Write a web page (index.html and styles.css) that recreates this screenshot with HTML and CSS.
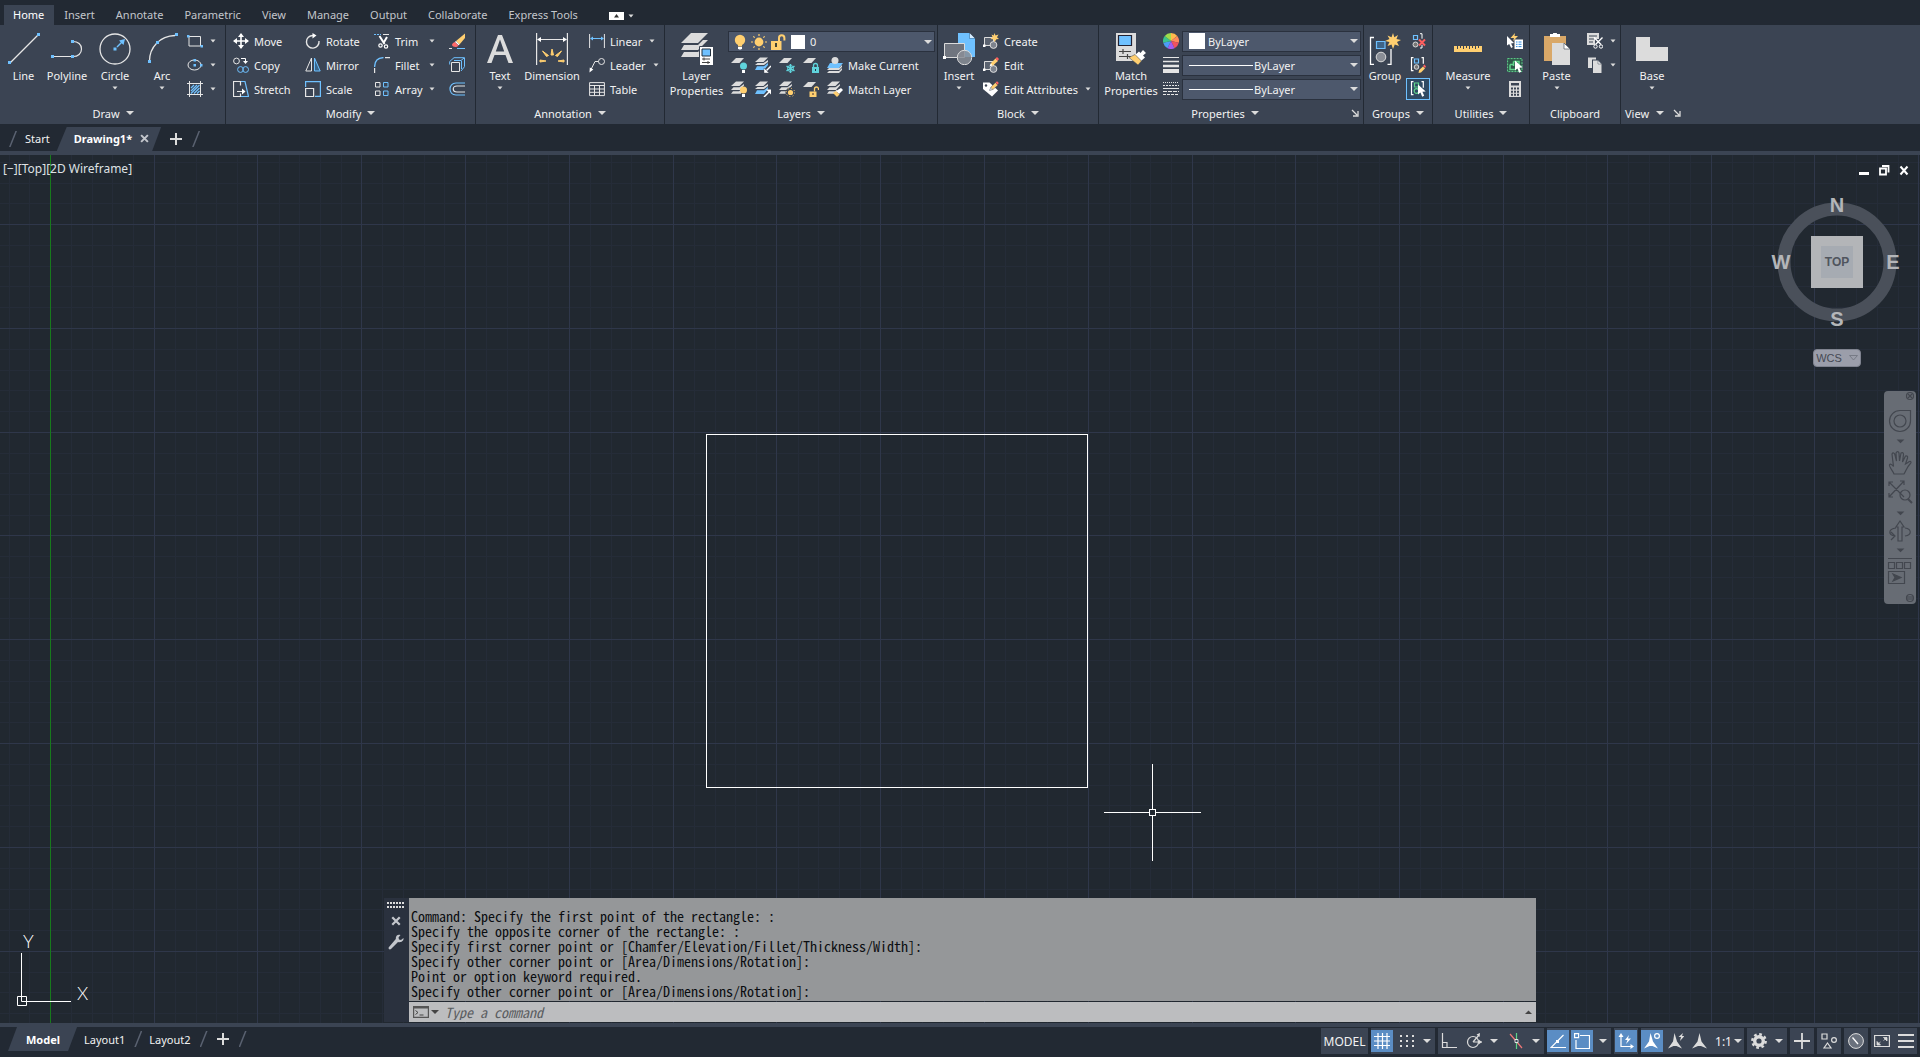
FILE: index.html
```
<!DOCTYPE html>
<html lang="en">
<head>
<meta charset="utf-8">
<meta name="viewport" content="width=device-width, initial-scale=1">
<title>Drawing1*</title>
<link rel="stylesheet" href="styles.css">
</head>
<body>
<svg class="sprite" aria-hidden="true">
  <symbol id="caret" viewBox="0 0 8 8"><path d="M0 2h8L4 6z" fill="#dcdcdc"/></symbol>
  <symbol id="caret-s" viewBox="0 0 6 6"><path d="M0.500 1.500h5L3 4.500z" fill="#dcdcdc"/></symbol>
  <symbol id="launcher" viewBox="0 0 8 8"><path d="M1 1l5 5M7 2v5H2" fill="none" stroke="#dcdcdc" stroke-width="1.300"/></symbol>

  <symbol id="line" viewBox="0 0 32 32"><path d="M2 30L30 2" stroke="#e6e6e6" stroke-width="1.200"/><path d="M0 28h3v3H0zM29 0h3v3h-3z" fill="#6fc1ff"/></symbol>
  <symbol id="polyline" viewBox="0 0 32 32"><path d="M3 23.500H20M22 8.500c5 0 8.500 3 8.500 7.500s-3.500 7.500-8.500 7.500" fill="none" stroke="#e6e6e6" stroke-width="1.200"/><path d="M0 22h3v3H0zM20 22h3v3h-3zM20 7h3v3h-3z" fill="#6fc1ff"/></symbol>
  <symbol id="circle" viewBox="0 0 32 32"><circle cx="16" cy="16" r="15" fill="none" stroke="#e6e6e6" stroke-width="1.300"/><path d="M18 14l5-5" stroke="#6fc1ff" stroke-width="1.500"/><path d="M14.500 14.500h3v3h-3zM26 6l-1.500 6-4.500-4.500z" fill="#6fc1ff"/></symbol>
  <symbol id="arc" viewBox="0 0 32 32"><path d="M3.500 28C3.500 14 14 3 29 2.500" fill="none" stroke="#e6e6e6" stroke-width="1.300"/><path d="M2 27h3v3H2zM10 8h3v3h-3zM29 0h3v3h-3z" fill="#6fc1ff"/></symbol>
  <symbol id="rect" viewBox="0 0 16 16"><path d="M2 3.500H13.500V13H2z" fill="none" stroke="#e6e6e6"/><path d="M0 2h2.500v2.500H0zM13.500 12H16v2.500h-2.500z" fill="#6fc1ff"/></symbol>
  <symbol id="ellipse" viewBox="0 0 16 16"><ellipse cx="7.500" cy="8" rx="6.500" ry="5" fill="none" stroke="#e6e6e6"/><path d="M6.500 7h2.500v2.500H6.500zM6.500 2H9v2.500H6.500zM13 7h2.500v2.500H13z" fill="#6fc1ff"/></symbol>
  <symbol id="hatch" viewBox="0 0 16 16"><path d="M2.500 0v16M13.500 0v16M0 2.500h16M0 13.500h16" stroke="#e6e6e6"/><path d="M4 7l3-3M4 10l6-6M4 12.500L12.500 4M7 12.500L12.500 7M10 12.500l2.500-2.500" stroke="#6fc1ff" stroke-width="1.200"/></symbol>

  <symbol id="move" viewBox="0 0 16 16"><path d="M8 1v14M1 8h14" stroke="#fff" stroke-width="1.600"/><path d="M8 0l3 4H5zM8 16l3-4H5zM0 8l4-3v6zM16 8l-4-3v6z" fill="#fff"/></symbol>
  <symbol id="copy" viewBox="0 0 16 16"><g fill="none"><circle cx="3.500" cy="4" r="2.900" stroke="#e6e6e6"/><circle cx="7.500" cy="12.500" r="2.900" stroke="#6fc1ff"/><circle cx="12.600" cy="12.500" r="2.900" stroke="#6fc1ff"/><path d="M8 1.500h4.500V5" stroke="#fff"/></g><path d="M10 4h5l-2.500 3z" fill="#fff"/></symbol>
  <symbol id="stretch" viewBox="0 0 16 16"><path d="M7.500 4.500v-4h-7v15h7v-3M4 10.500h6" fill="none" stroke="#e6e6e6" stroke-width="1.200"/><path d="M9 7.500l3.500 3L9 13.500z" fill="#fff"/><path d="M8 .5h4l3.500 15H8" fill="none" stroke="#6fc1ff" stroke-width="1.200"/></symbol>
  <symbol id="rotate" viewBox="0 0 16 16"><path d="M8 2.500A6.300 6.300 0 1 0 14 8" fill="none" stroke="#e6e6e6" stroke-width="1.400"/><path d="M7.500 0v5.500L11.500 2.500z" fill="#fff"/></symbol>
  <symbol id="mirror" viewBox="0 0 16 16"><path d="M6.500 1v13H.8z" fill="none" stroke="#e6e6e6"/><path d="M9.500 1v13h5.700z" fill="#3a668b" stroke="#6fc1ff"/></symbol>
  <symbol id="scale" viewBox="0 0 16 16"><path d="M.6 6V.6h14.800v14.800H10" fill="none" stroke="#6fc1ff" stroke-width="1.200"/><path d="M.6 7.500h8v8h-8z" fill="none" stroke="#e6e6e6" stroke-width="1.200"/></symbol>
  <symbol id="trim" viewBox="0 0 16 16"><path d="M0 1.500h7" stroke="#6fc1ff" stroke-dasharray="2 1"/><path d="M9 1.500h6" stroke="#e6e6e6"/><path d="M5.500 3l5 8M13 4l-3.500 6" stroke="#fff" stroke-width="2"/><circle cx="6.500" cy="12.500" r="1.700" fill="none" stroke="#fff" stroke-width="1.200"/><circle cx="12" cy="13.500" r="1.700" fill="none" stroke="#fff" stroke-width="1.200"/></symbol>
  <symbol id="fillet" viewBox="0 0 16 16"><path d="M.6 10C.6 4 4 .8 9.500.6" fill="none" stroke="#6fc1ff" stroke-width="1.300"/><path d="M.6 11v5M11 .6h5" stroke="#e6e6e6" stroke-width="1.200"/></symbol>
  <symbol id="array" viewBox="0 0 16 16"><path d="M1.500 1.500h4.500v4.500H1.500zM1.500 10h4.500v4.500H1.500z" fill="none" stroke="#e6e6e6"/><path d="M9.500 1.500H14v4.500H9.500zM9.500 10H14v4.500H9.500z" fill="none" stroke="#6fc1ff"/></symbol>
  <symbol id="erase" viewBox="0 0 16 16"><path d="M16 .5L7 8l3.500 3.500L16 5z" fill="#ffcf70"/><path d="M7 8l3.500 3.500-1 .8L5.800 9z" fill="#fff"/><path d="M5.800 9l3.700 3.500C7.500 15 3.500 14 3 12c0-1.500 1.500-2.500 2.800-3z" fill="#ff6a6a"/><path d="M0 15.500h3" stroke="#e6e6e6"/><path d="M8 15.500h8" stroke="#6fc1ff"/></symbol>
  <symbol id="explode" viewBox="0 0 16 16"><path d="M2.500 5.500h8v9h-8z" fill="none" stroke="#e6e6e6"/><path d="M.7 4.500L5 .7h10.500v9L12 14M.7 4.500v3M5 3.500h7l3-2.500M12.500 4v8" fill="none" stroke="#6fc1ff"/></symbol>
  <symbol id="offset" viewBox="0 0 16 16"><path d="M16 2H7C-1 2-1 14 7 14h9" fill="none" stroke="#6fc1ff" stroke-width="1.200"/><path d="M16 5H8C3 5 3 11 8 11h8" fill="none" stroke="#e6e6e6" stroke-width="1.200"/></symbol>

  <symbol id="text" viewBox="0 0 32 32"><path d="M3 30L14 2h4l11 28h-4.500l-3-8h-11l-3 8zM11.800 18.500h8.400L16 6.500z" fill="#dcdcdc" fill-rule="evenodd"/></symbol>
  <symbol id="dimension" viewBox="0 0 32 32"><path d="M.6 0v32M31.400 0v32M3 6.500h26" stroke="#e6e6e6" stroke-width="1.200"/><path d="M1 6.500L5 4v5zM31 6.500L27 4v5z" fill="#fff"/><path d="M15 22l1-6 1.500 6zM10.500 23.500L6.500 18l6 4.500zM21.500 23.500l4-5.500-6 4.500zM10 28l-6-1v2zM22 28l6-1v2z" fill="#ffcf70" stroke="#ffcf70"/></symbol>
  <symbol id="linear" viewBox="0 0 16 16"><path d="M.6 1v14M15.400 1v14" stroke="#e6e6e6"/><path d="M2 5.500h12" stroke="#6fc1ff"/><path d="M1 5.500l3-2v4zM15 5.500l-3-2v4z" fill="#6fc1ff"/></symbol>
  <symbol id="leader" viewBox="0 0 16 16"><circle cx="12.500" cy="4.500" r="3" fill="none" stroke="#e6e6e6"/><path d="M9.500 4.500H6l-4 8" fill="none" stroke="#e6e6e6"/><path d="M.5 15.500l.3-5 3.500 2z" fill="#fff"/></symbol>
  <symbol id="table" viewBox="0 0 16 16"><path d="M.6 1.600h14.800v13H.6zM.6 4.500h14.800M.6 8h14.800M.6 11.300h14.800M5.500 4.500v10M10.500 4.500v10" fill="none" stroke="#e6e6e6"/></symbol>

  <symbol id="layerprops" viewBox="0 0 32 32"><path d="M10 0h17l-10 10H0z" fill="#dcdcdc"/><path d="M3 12h14l5-5h5L17 17H0zM3 19h14l3-3v8H0z" fill="#dcdcdc"/><path d="M18.500 13.500h14v19h-14z" fill="#fff" stroke="#3b4453"/><path d="M21 16h8.500v7H21z" fill="#6fc1ff" stroke="#22303e"/><path d="M21 26h8M21 29.500h8M23 24.500v3M27 28v3" stroke="#444"/></symbol>
  <symbol id="sheet" viewBox="0 0 16 16"><path d="M5 1h8l-4.500 5H0z" fill="#dcdcdc"/></symbol>
  <symbol id="sheets" viewBox="0 0 16 16"><path d="M5 .5h8L8.500 5H0z" fill="#dcdcdc"/><path d="M2.500 6.200h6L13 3v1.500L9 9H0zM2 10.200h6l2-1.500v4H0z" fill="#dcdcdc"/></symbol>
  <symbol id="sheets-blue" viewBox="0 0 16 16"><path d="M5 .5h8L8.500 5H0z" fill="#dcdcdc"/><path d="M2.500 6h6L13 3v2L9 8H0z" fill="#dcdcdc"/><path d="M2 9.200h7L13 6v2l-4 5H0z" fill="#6fc1ff"/></symbol>
  <symbol id="l-off" viewBox="0 0 16 16"><use href="#sheet"/><circle cx="12.500" cy="9" r="3.500" fill="#5fd3dc"/><path d="M11 13h3v3h-3z" fill="#fff"/></symbol>
  <symbol id="l-iso" viewBox="0 0 16 16"><use href="#sheets-blue"/><path d="M16 9l-5 5" stroke="#fff" stroke-width="1.500"/><path d="M9 16v-5l5 5z" fill="#fff" stroke="#3b4453" stroke-width=".4"/></symbol>
  <symbol id="l-freeze" viewBox="0 0 16 16"><use href="#sheet"/><path d="M11.500 7v9M7.500 9.200l8 4.600M15.500 9.200l-8 4.600" stroke="#5fd3dc" stroke-width="1.500"/><circle cx="11.500" cy="11.500" r="3" fill="none" stroke="#5fd3dc"/></symbol>
  <symbol id="l-lock" viewBox="0 0 16 16"><use href="#sheet"/><path d="M10.500 10.500V8.500a2 2 0 0 1 4 0v2" fill="none" stroke="#5fd3dc" stroke-width="1.300"/><path d="M9 10h7v6H9z" fill="#5fd3dc"/><path d="M12 12h1v2h-1z" fill="#234"/></symbol>
  <symbol id="l-current" viewBox="0 0 16 16"><path d="M3 6h13l-4 5H0z" fill="#6fc1ff"/><circle cx="8" cy="3.500" r="3.500" fill="#dcdcdc"/><path d="M2 11h10l3-3v2l-3 3H0zM2 14h10l3-3v2l-3 3H0z" fill="#dcdcdc"/></symbol>
  <symbol id="l-on" viewBox="0 0 16 16"><use href="#sheets"/><circle cx="12.500" cy="9" r="3.500" fill="#ffcf70"/><path d="M11 13h3v3h-3z" fill="#fff"/></symbol>
  <symbol id="l-uniso" viewBox="0 0 16 16"><use href="#sheets-blue"/><path d="M9 16l5-5" stroke="#fff" stroke-width="1.500"/><path d="M16 8.500v5l-5-5z" fill="#fff"/></symbol>
  <symbol id="l-thaw" viewBox="0 0 16 16"><use href="#sheets"/><circle cx="11.500" cy="11.500" r="5" fill="#3b4453"/><circle cx="11.500" cy="11.500" r="2.600" fill="#ffcf70"/><circle cx="11.500" cy="11.500" r="4.200" fill="none" stroke="#ffcf70" stroke-dasharray="1 2.300"/></symbol>
  <symbol id="l-unlock" viewBox="0 0 16 16"><use href="#sheet"/><path d="M11.500 10.500V8a2 2 0 0 1 4 0v1" fill="none" stroke="#ffcf70" stroke-width="1.300"/><path d="M6.500 10.500h7V16h-7z" fill="#ffcf70"/><path d="M9.500 12h1v2h-1z" fill="#433"/></symbol>
  <symbol id="l-match" viewBox="0 0 16 16"><use href="#sheets"/><path d="M14 7l2 2-4 4-3-3z" fill="#fff"/><path d="M9 10l3.500 3.500L10 16l-4-4z" fill="#ffcf70"/></symbol>

  <symbol id="bulb" viewBox="0 0 16 16"><circle cx="8" cy="6" r="5.200" fill="#ffcf70"/><path d="M6 11h4v1.500H6z" fill="#ffcf70"/><path d="M6 13h4v1.500l-1 1H7l-1-1z" fill="#fff"/></symbol>
  <symbol id="sun" viewBox="0 0 16 16"><circle cx="8" cy="8" r="4.400" fill="#ffcf70"/><path d="M8 0v2M8 14v2M0 8h2M14 8h2M2.300 2.300l1.400 1.400M12.300 12.300l1.400 1.400M2.300 13.700l1.400-1.400M12.300 3.700l1.400-1.400" stroke="#ffcf70" stroke-width="1.200"/></symbol>
  <symbol id="padlock" viewBox="0 0 16 16"><path d="M9 7V4a2.700 2.700 0 0 1 5.400 0v2.500" fill="none" stroke="#ffcf70" stroke-width="2"/><path d="M1 7h10.500v9H1z" fill="#ffcf70"/><path d="M5 9h2v4H5z" fill="#443"/></symbol>

  <symbol id="insert" viewBox="0 0 32 32"><path d="M15 0h11l6 6v18H15z" fill="#6fc1ff"/><path d="M26.500 0v5.500H32" fill="#d8eeff" stroke="#2a6ea6" stroke-width=".6"/><path d="M1.500 10.500h20v14h-20z" fill="#70757f" stroke="#dcdcdc"/><circle cx="21.500" cy="24.500" r="7.200" fill="#8a8e96" fill-opacity=".85" stroke="#dcdcdc"/><path d="M0 23h3v3H0z" fill="#fff"/></symbol>
  <symbol id="blk" viewBox="0 0 16 16"><path d="M1.500 4.500h9v8h-9z" fill="#5b6370" stroke="#dcdcdc"/><circle cx="10.500" cy="12" r="3.400" fill="#7c828d" stroke="#dcdcdc"/><path d="M0 11.500h2.500V14H0z" fill="#fff"/></symbol>
  <symbol id="create" viewBox="0 0 16 16"><use href="#blk"/><path d="M11.500 0l1 2.500L15.500 1.500 14 4.200 16 6l-2.600.2L11.500 9 10.300 6.200 7.500 6 9.500 4 8.500 1.500l2.200 1z" fill="#ffcf70"/></symbol>
  <symbol id="pencil" viewBox="0 0 16 16"><path d="M7 9l1-3 4.500-4.500 2.500 2.500L10 8.500z" fill="#ffcf70"/><path d="M12.500 1.500L14 0l2 2-1.500 2z" fill="#ff5f5f"/><path d="M6.500 9.500l1.300-3 1.800 1.800z" fill="#fff"/></symbol>
  <symbol id="edit" viewBox="0 0 16 16"><use href="#blk"/><use href="#pencil"/></symbol>
  <symbol id="editattr" viewBox="0 0 16 16"><path d="M0 1.500h6.500l8.500 8L9 15.500 0 8z" fill="#fff"/><circle cx="3" cy="4.500" r="1.200" fill="#3b4453"/><use href="#pencil" stroke="#3b4453" stroke-width=".4"/></symbol>

  <symbol id="matchprops" viewBox="0 0 32 32"><path d="M1 0h20v28H1z" fill="#dcdcdc"/><path d="M3.500 2.500h13v10h-13z" fill="#6fc1ff" stroke="#223" stroke-width="1.200"/><path d="M4 18.500h12M4 23.500h12M8 16v5M12.500 21v5" stroke="#444" stroke-width="1.200"/><path d="M28 17l3 3-3 2.500 2 2-4 3.500-6-6 4-3.500 1.500 1.500z" fill="#fff"/><path d="M20 21.500l6.500 6.500-3.500 4-9-7.500z" fill="#ffcf70" stroke="#3b4453" stroke-width=".5"/></symbol>
  <symbol id="wheel" viewBox="0 0 16 16"><path d="M8 8L8 0A8 8 0 0 1 14.300 3z" fill="#ffb84d"/><path d="M8 8l6.300-5A8 8 0 0 1 15.800 9.800z" fill="#ff8a5c"/><path d="M8 8l7.800 1.800A8 8 0 0 1 11.500 15.200z" fill="#f0525f"/><path d="M8 8l3.500 7.200A8 8 0 0 1 4.500 15.200z" fill="#a25cf0"/><path d="M8 8l-3.500 7.200A8 8 0 0 1 .2 9.800z" fill="#4c9df5"/><path d="M8 8L.2 9.800A8 8 0 0 1 1.700 3z" fill="#3cc48c"/><path d="M8 8L1.700 3A8 8 0 0 1 8 0z" fill="#9fdc4c"/></symbol>
  <symbol id="lweight" viewBox="0 0 16 16"><path d="M0 .5h16" stroke="#e6e6e6"/><path d="M0 4.500h16" stroke="#e6e6e6" stroke-width="1.500"/><path d="M0 9h16" stroke="#e6e6e6" stroke-width="2.500"/><path d="M0 14h16" stroke="#e6e6e6" stroke-width="4"/></symbol>
  <symbol id="ltype" viewBox="0 0 16 16"><g stroke="#e6e6e6"><path d="M0 1.500h16" stroke-dasharray="1 1"/><path d="M0 4.500h16" stroke-dasharray="2 1"/><path d="M0 7.500h16"/><path d="M0 10.500h16" stroke-dasharray="4 1"/><path d="M0 13.500h16" stroke-dasharray="3 1"/></g></symbol>

  <symbol id="star" viewBox="0 0 16 16"><path d="M8 0l1.300 4.300L13 2 11.500 6 16 7l-4 2 2 4-4.200-1.500L8 16l-1.500-4.500L2.500 13 4.500 9 0 8l4.500-2L2.500 2.500l4 1.800z" fill="#ffcf70"/></symbol>
  <symbol id="group" viewBox="0 0 32 32"><path d="M5 4.500H1.500v27H5M18.500 31.500H22V16" fill="none" stroke="#fff" stroke-width="1.300"/><path d="M7.500 8.500H16v7H7.500z" fill="#3d6488" stroke="#6fc1ff" stroke-width="1.200"/><circle cx="12" cy="24" r="4.800" fill="#8a8e96" stroke="#dcdcdc"/><use href="#star" x="16" y="0" width="16" height="16"/></symbol>
  <symbol id="brk" viewBox="0 0 16 16"><path d="M3.500.7H1.500v13h2M11.500.7h1.800v6" fill="none" stroke="#fff" stroke-width="1.200"/></symbol>
  <symbol id="ungroup" viewBox="0 0 16 16"><path d="M10 .7h2v5M12 12v3h-2" fill="none" stroke="#fff"/><path d="M3.500 2.500h4v4h-4z" fill="none" stroke="#6fc1ff" stroke-width="1.200"/><circle cx="5.500" cy="11.500" r="2.500" fill="#777" stroke="#dcdcdc"/><path d="M9 6.500l6 6M15 6.500l-6 6" stroke="#ff5f5f" stroke-width="2"/></symbol>
  <symbol id="groupedit" viewBox="0 0 16 16"><use href="#brk"/><path d="M4.500 2h4v4h-4z" fill="none" stroke="#6fc1ff" stroke-width="1.200"/><circle cx="6.500" cy="10" r="2.300" fill="#777" stroke="#dcdcdc"/><path d="M8.500 16l.7-3L13 9.500l2 2-4 4z" fill="#ffcf70"/><path d="M13 9l1.500-1.500 1.500 2L15 11z" fill="#ff5f5f"/></symbol>
  <symbol id="cursor" viewBox="0 0 16 16"><path d="M8 3.500v10l2.400-2 1.800 4.300 2-1-1.800-4 3.300-.4z" fill="#fff"/></symbol>
  <symbol id="groupsel" viewBox="0 0 16 16"><use href="#brk"/><path d="M4.500 2h4v4h-4z" fill="none" stroke="#5fd38a" stroke-width="1.200"/><circle cx="6.500" cy="10" r="2.300" fill="none" stroke="#5fd38a" stroke-width="1.200"/><use href="#cursor"/></symbol>
  <symbol id="measure" viewBox="0 0 32 32"><path d="M2 13h28v6H2z" fill="#ffcf70"/><path d="M5.500 12v4M8.500 12v3M11.500 12v4M14.500 12v3M17.500 12v4M20.500 12v3M23.500 12v4M26.500 12v3" stroke="#3b4453"/></symbol>
  <symbol id="qselect" viewBox="0 0 16 16"><path d="M8 0L3.500 5H7L6 8l5-5H7.500z" fill="#ffcf70"/><path d="M0 3v9.500L2.200 11l2 4 1.600-1-1.700-3.500L7 10z" fill="#fff"/><path d="M7.500 6.500H16V16H7.500z" fill="#fff"/><path d="M9 9h1.500M9 11.300h1.500M9 13.600h1.500M11.500 9h3M11.500 11.300h3M11.500 13.600h3" stroke="#2a8ae0"/></symbol>
  <symbol id="selall" viewBox="0 0 16 16"><path d="M.6 1.600H15v13H.6z" fill="#2e5748" stroke="#5fd38a" stroke-dasharray="2 1"/><path d="M6.500 4.500H12v6M6.500 4.500V9M3 7.500h4M3 7.500v5h6" fill="none" stroke="#5fd38a" stroke-width="1.500"/><use href="#cursor"/></symbol>
  <symbol id="calc" viewBox="0 0 16 16"><path d="M2 0h12v16H2z" fill="#dcdcdc"/><path d="M4 2h8v2.500H4zM4 6.500h2v2H4zM7 6.500h2v2H7zM10 6.500h2v2h-2zM4 9.700h2v2H4zM7 9.700h2v2H7zM10 9.700h2v2h-2zM4 12.800h2v2H4zM7 12.800h2v2H7zM10 12.800h2v2h-2z" fill="#3b4453"/></symbol>
  <symbol id="paste" viewBox="0 0 32 32"><path d="M3 3h22v8H11v17H3z" fill="#d9a868"/><path d="M9 1h3a2 2 0 0 1 4 0h3v3H9z" fill="#fff"/><path d="M11 10h12l6 6v16H11z" fill="#dcdcdc"/><path d="M23 10v6h6z" fill="#fff" stroke="#3b4453" stroke-width=".6"/></symbol>
  <symbol id="cut" viewBox="0 0 16 16"><path d="M0 0h12v6H8v6H0z" fill="#dcdcdc"/><path d="M2 3h8M2 6h5M2 9h4" stroke="#3b4453"/><path d="M15.500 4.500L8.500 11.500M7 4.500l7 7" stroke="#fff" stroke-width="1.400"/><circle cx="8.500" cy="13.500" r="1.700" fill="none" stroke="#fff"/><circle cx="14" cy="13.500" r="1.700" fill="none" stroke="#fff"/></symbol>
  <symbol id="copyclip" viewBox="0 0 16 16"><path d="M1 .5h8v2H5v8.500H1z" fill="#dcdcdc"/><path d="M6 3.500h5l3.500 3.500v9H6z" fill="#dcdcdc"/><path d="M11 3.500V7h3.500z" fill="#fff" stroke="#3b4453" stroke-width=".5"/></symbol>
  <symbol id="base" viewBox="0 0 32 32"><path d="M0 4h14v10h18v14H0z" fill="#dcdcdc"/></symbol>

  <symbol id="plus" viewBox="0 0 12 12"><path d="M6 0v12M0 6h12" stroke="#dcdcdc" stroke-width="2"/></symbol>
  <symbol id="cross" viewBox="0 0 8 8"><path d="M1 1l6 6M7 1L1 7" stroke="#c3c6cc" stroke-width="1.800"/></symbol>

  <symbol id="s-grid" viewBox="0 0 16 16"><path d="M4 0v16M8.500 0v16M13 0v16M0 3.500h16M0 8h16M0 12.500h16" stroke="#fff" stroke-width="1.200"/></symbol>
  <symbol id="s-snap" viewBox="0 0 16 16"><path d="M1 3h14M1 8h14M1 13h14" stroke="#dcdcdc" stroke-width="2" stroke-dasharray="2 4"/></symbol>
  <symbol id="s-ortho" viewBox="0 0 16 16"><path d="M1.500 0v14.500H16M1.500 9.500h4.500v5" fill="none" stroke="#dcdcdc" stroke-width="1.200"/></symbol>
  <symbol id="s-polar" viewBox="0 0 16 16"><circle cx="7" cy="9" r="5.500" fill="none" stroke="#dcdcdc" stroke-width="1.200"/><path d="M7 9h9M7 9l6-7" stroke="#dcdcdc" stroke-width="1.200"/><path d="M12.500 6.500l3.500 2.500-3.500 2.500zM14 0l-.5 4-3-2.500z" fill="#dcdcdc"/></symbol>
  <symbol id="s-iso" viewBox="0 0 16 16"><path d="M2 1l12 14" stroke="#f07878" stroke-width="1.200"/><path d="M8.500 0v16" stroke="#5fd38a" stroke-width="1.200"/><path d="M7 6.500h3v3H7z" fill="#3b4453" stroke="#fff" stroke-width=".8"/></symbol>
  <symbol id="s-track" viewBox="0 0 16 16"><path d="M16 14.500H1L13.500 2" fill="none" stroke="#fff" stroke-width="1.200"/><path d="M6 7h3v3H6z" fill="#fff"/></symbol>
  <symbol id="s-osnap" viewBox="0 0 16 16"><path d="M6 2.500h9.500v13H2V7" fill="none" stroke="#fff" stroke-width="1.200"/><path d="M.6.600h4v4h-4z" fill="none" stroke="#fff" stroke-width="1.200"/></symbol>
  <symbol id="s-ducs" viewBox="0 0 16 16"><path d="M3 3v10.500h10" fill="none" stroke="#fff" stroke-width="1.200"/><path d="M3 0l2.500 4H.5zM16 13.500L12.500 11v5zM11 2L7 7h2.500L8 11l5-5.500h-3z" fill="#fff"/></symbol>
  <symbol id="needle" viewBox="0 0 16 16"><path d="M7.500 0l2 8.500L15 15.500 9 13H6L0 15.500 5.500 8.500z" fill="#dcdcdc"/></symbol>
  <symbol id="s-anno" viewBox="0 0 16 16"><path d="M6.500 0l2.500 8.500L14 15.500 8.500 13h-3L0 15.500 5 8.500z" fill="#fff"/><circle cx="13" cy="3" r="2.400" fill="none" stroke="#fff" stroke-width="1.200"/></symbol>
  <symbol id="s-auto" viewBox="0 0 16 16"><path d="M6.500 0l2.500 8.500L14 15.500 8.500 13h-3L0 15.500 5 8.500z" fill="#dcdcdc"/><path d="M15 0l-4.500 4H13l-1 4 4.500-5H14z" fill="#dcdcdc"/></symbol>
  <symbol id="gear" viewBox="0 0 16 16"><circle cx="8" cy="8" r="4.300" fill="none" stroke="#dcdcdc" stroke-width="3.400"/><circle cx="8" cy="8" r="6.700" fill="none" stroke="#dcdcdc" stroke-width="2.400" stroke-dasharray="2.700 2.560"/></symbol>
  <symbol id="bigplus" viewBox="0 0 16 16"><path d="M8 0v16M0 8h16" stroke="#dcdcdc" stroke-width="1.800"/></symbol>
  <symbol id="s-isolate" viewBox="0 0 16 16"><path d="M1 1h5v5H1zM6.500 10l3.500 5H3z" fill="none" stroke="#dcdcdc" stroke-width="1.200"/><circle cx="13" cy="7" r="2.400" fill="none" stroke="#dcdcdc" stroke-width="1.200"/></symbol>
  <symbol id="s-perf" viewBox="0 0 16 16"><circle cx="8" cy="8" r="7.400" fill="#6a717d" stroke="#dcdcdc"/><path d="M4.500 4.500L10 11" stroke="#fff" stroke-width="1.300"/></symbol>
  <symbol id="s-clean" viewBox="0 0 16 16"><path d="M.6 2.500h14.800v11H.6z" fill="none" stroke="#dcdcdc" stroke-width="1.200"/><path d="M9.500 4.500H13V8zM3 8.500V12h3.500zM12.500 5l-3 2.500M3.500 11.500l3-2.500" stroke="#dcdcdc" fill="#dcdcdc" stroke-width=".8"/></symbol>
  <symbol id="s-menu" viewBox="0 0 16 16"><path d="M0 2h16M0 8h16M0 14h16" stroke="#dcdcdc" stroke-width="2"/></symbol>
</svg>

<header class="ribbon">
  <nav class="ribbon-tabs" aria-label="Ribbon tabs">
    <a class="rtab active" href="#home">Home</a><a class="rtab" href="#insert-tab">Insert</a><a class="rtab" href="#annotate">Annotate</a><a class="rtab" href="#parametric">Parametric</a><a class="rtab" href="#view">View</a><a class="rtab" href="#manage">Manage</a><a class="rtab" href="#output">Output</a><a class="rtab" href="#collaborate">Collaborate</a><a class="rtab" href="#express">Express Tools</a>
    <button class="minimize" aria-label="Minimize ribbon"><svg width="15" height="8" viewBox="0 0 15 8"><path d="M0 0h15v8H0z" fill="#fff"/><path d="M5 5.500h5L7.500 2z" fill="#333"/></svg><svg width="6" height="6"><use href="#caret-s"/></svg></button>
  </nav>

  <div class="panels">
    <section class="panel p-draw">
      <div class="panel-body">
        <button class="big"><svg><use href="#line"/></svg>Line</button>
        <button class="big"><svg><use href="#polyline"/></svg>Polyline</button>
        <button class="big"><svg><use href="#circle"/></svg>Circle<svg class="car"><use href="#caret-s"/></svg></button>
        <button class="big"><svg><use href="#arc"/></svg>Arc<svg class="car"><use href="#caret-s"/></svg></button>
        <div class="col">
          <button class="small" aria-label="Rectangle"><svg><use href="#rect"/></svg><svg class="car"><use href="#caret-s"/></svg></button>
          <button class="small" aria-label="Ellipse"><svg><use href="#ellipse"/></svg><svg class="car"><use href="#caret-s"/></svg></button>
          <button class="small" aria-label="Hatch"><svg><use href="#hatch"/></svg><svg class="car"><use href="#caret-s"/></svg></button>
        </div>
      </div>
      <button class="panel-title">Draw<svg class="tcar"><use href="#caret"/></svg></button>
    </section>

    <section class="panel p-modify">
      <div class="panel-body">
        <div class="col">
          <button class="small"><svg><use href="#move"/></svg>Move</button>
          <button class="small"><svg><use href="#copy"/></svg>Copy</button>
          <button class="small"><svg><use href="#stretch"/></svg>Stretch</button>
        </div>
        <div class="col">
          <button class="small"><svg><use href="#rotate"/></svg>Rotate</button>
          <button class="small"><svg><use href="#mirror"/></svg>Mirror</button>
          <button class="small"><svg><use href="#scale"/></svg>Scale</button>
        </div>
        <div class="col wide">
          <button class="small"><svg><use href="#trim"/></svg>Trim<svg class="car"><use href="#caret-s"/></svg></button>
          <button class="small"><svg><use href="#fillet"/></svg>Fillet<svg class="car"><use href="#caret-s"/></svg></button>
          <button class="small"><svg><use href="#array"/></svg>Array<svg class="car"><use href="#caret-s"/></svg></button>
        </div>
        <div class="col">
          <button class="small" aria-label="Erase"><svg><use href="#erase"/></svg></button>
          <button class="small" aria-label="Explode"><svg><use href="#explode"/></svg></button>
          <button class="small" aria-label="Offset"><svg><use href="#offset"/></svg></button>
        </div>
      </div>
      <button class="panel-title">Modify<svg class="tcar"><use href="#caret"/></svg></button>
    </section>

    <section class="panel p-annotation">
      <div class="panel-body">
        <button class="big"><svg><use href="#text"/></svg>Text<svg class="car"><use href="#caret-s"/></svg></button>
        <button class="big"><svg><use href="#dimension"/></svg>Dimension</button>
        <div class="col">
          <button class="small"><svg><use href="#linear"/></svg>Linear<svg class="car"><use href="#caret-s"/></svg></button>
          <button class="small"><svg><use href="#leader"/></svg>Leader<svg class="car"><use href="#caret-s"/></svg></button>
          <button class="small"><svg><use href="#table"/></svg>Table</button>
        </div>
      </div>
      <button class="panel-title">Annotation<svg class="tcar"><use href="#caret"/></svg></button>
    </section>

    <section class="panel p-layers">
      <div class="panel-body">
        <button class="big"><svg><use href="#layerprops"/></svg>Layer<br>Properties</button>
        <div class="col">
          <div class="combo layer-combo">
            <svg><use href="#bulb"/></svg><svg><use href="#sun"/></svg><svg><use href="#padlock"/></svg><span class="swatch small-swatch"></span>
            <select aria-label="Layer"><option>0</option></select><svg class="tcar"><use href="#caret"/></svg>
          </div>
          <div class="tools">
            <button class="small" aria-label="Layer off"><svg><use href="#l-off"/></svg></button>
            <button class="small" aria-label="Isolate"><svg><use href="#l-iso"/></svg></button>
            <button class="small" aria-label="Freeze"><svg><use href="#l-freeze"/></svg></button>
            <button class="small" aria-label="Lock"><svg><use href="#l-lock"/></svg></button>
            <button class="small"><svg><use href="#l-current"/></svg>Make Current</button>
          </div>
          <div class="tools">
            <button class="small" aria-label="Turn all layers on"><svg><use href="#l-on"/></svg></button>
            <button class="small" aria-label="Unisolate"><svg><use href="#l-uniso"/></svg></button>
            <button class="small" aria-label="Thaw all layers"><svg><use href="#l-thaw"/></svg></button>
            <button class="small" aria-label="Unlock"><svg><use href="#l-unlock"/></svg></button>
            <button class="small"><svg><use href="#l-match"/></svg>Match Layer</button>
          </div>
        </div>
      </div>
      <button class="panel-title">Layers<svg class="tcar"><use href="#caret"/></svg></button>
    </section>

    <section class="panel p-block">
      <div class="panel-body">
        <button class="big"><svg><use href="#insert"/></svg>Insert<svg class="car"><use href="#caret-s"/></svg></button>
        <div class="col">
          <button class="small"><svg><use href="#create"/></svg>Create</button>
          <button class="small"><svg><use href="#edit"/></svg>Edit</button>
          <button class="small"><svg><use href="#editattr"/></svg>Edit Attributes<svg class="car"><use href="#caret-s"/></svg></button>
        </div>
      </div>
      <button class="panel-title">Block<svg class="tcar"><use href="#caret"/></svg></button>
    </section>

    <section class="panel p-properties">
      <div class="panel-body">
        <button class="big"><svg><use href="#matchprops"/></svg>Match<br>Properties</button>
        <div class="col">
          <div class="prop"><svg><use href="#wheel"/></svg><div class="combo"><span class="swatch"></span><select aria-label="Object color"><option>ByLayer</option></select><svg class="tcar"><use href="#caret"/></svg></div></div>
          <div class="prop"><svg><use href="#lweight"/></svg><div class="combo"><span class="rule"></span><select aria-label="Lineweight"><option>ByLayer</option></select><svg class="tcar"><use href="#caret"/></svg></div></div>
          <div class="prop"><svg><use href="#ltype"/></svg><div class="combo"><span class="rule"></span><select aria-label="Linetype"><option>ByLayer</option></select><svg class="tcar"><use href="#caret"/></svg></div></div>
        </div>
      </div>
      <div class="title-row"><button class="panel-title">Properties<svg class="tcar"><use href="#caret"/></svg></button><button class="launch" aria-label="Properties palette"><svg class="tcar"><use href="#launcher"/></svg></button></div>
    </section>

    <section class="panel p-groups">
      <div class="panel-body">
        <button class="big"><svg><use href="#group"/></svg>Group</button>
        <div class="col">
          <button class="small" aria-label="Ungroup"><svg><use href="#ungroup"/></svg></button>
          <button class="small" aria-label="Group edit"><svg><use href="#groupedit"/></svg></button>
          <button class="small pressed" aria-label="Group selection"><svg><use href="#groupsel"/></svg></button>
        </div>
      </div>
      <button class="panel-title">Groups<svg class="tcar"><use href="#caret"/></svg></button>
    </section>

    <section class="panel p-utilities">
      <div class="panel-body">
        <button class="big"><svg><use href="#measure"/></svg>Measure<svg class="car"><use href="#caret-s"/></svg></button>
        <div class="col">
          <button class="small" aria-label="Quick select"><svg><use href="#qselect"/></svg></button>
          <button class="small" aria-label="Select all"><svg><use href="#selall"/></svg></button>
          <button class="small" aria-label="Quick calculator"><svg><use href="#calc"/></svg></button>
        </div>
      </div>
      <button class="panel-title">Utilities<svg class="tcar"><use href="#caret"/></svg></button>
    </section>

    <section class="panel p-clipboard">
      <div class="panel-body">
        <button class="big"><svg><use href="#paste"/></svg>Paste<svg class="car"><use href="#caret-s"/></svg></button>
        <div class="col">
          <button class="small" aria-label="Cut"><svg><use href="#cut"/></svg><svg class="car"><use href="#caret-s"/></svg></button>
          <button class="small" aria-label="Copy clip"><svg><use href="#copyclip"/></svg><svg class="car"><use href="#caret-s"/></svg></button>
        </div>
      </div>
      <div class="panel-title">Clipboard</div>
    </section>

    <section class="panel p-view">
      <div class="panel-body">
        <button class="big"><svg><use href="#base"/></svg>Base<svg class="car"><use href="#caret-s"/></svg></button>
      </div>
      <div class="title-row"><button class="panel-title">View<svg class="tcar"><use href="#caret"/></svg></button><button class="launch" aria-label="View options"><svg class="tcar"><use href="#launcher"/></svg></button></div>
    </section>
  </div>
</header>

<nav class="file-tabs" aria-label="Open files">
  <span class="slash"></span>
  <a class="ftab" href="#start">Start</a>
  <div class="ftab current"><a href="#drawing1">Drawing1*</a><button class="close" aria-label="Close drawing"><svg width="9" height="9"><use href="#cross"/></svg></button></div>
  <button class="add" aria-label="New drawing"><svg width="12" height="12"><use href="#plus"/></svg></button>
  <span class="slash"></span>
</nav>

<main class="viewport">
  <svg class="drawing" role="img" aria-label="Drawing area">
    <defs>
      <pattern id="gridpat" x="50" y="69" width="519" height="519" patternUnits="userSpaceOnUse">
        <path class="minor" d="M21.500 0v519M42.500 0v519M62.500 0v519M83.500 0v519M125.500 0v519M146.500 0v519M166.500 0v519M187.500 0v519M229.500 0v519M249.500 0v519M270.500 0v519M291.500 0v519M332.500 0v519M353.500 0v519M374.500 0v519M394.500 0v519M436.500 0v519M457.500 0v519M478.500 0v519M498.500 0v519"/>
        <path class="minor" d="M0 21.500h519M0 42.500h519M0 62.500h519M0 83.500h519M0 125.500h519M0 146.500h519M0 166.500h519M0 187.500h519M0 229.500h519M0 249.500h519M0 270.500h519M0 291.500h519M0 332.500h519M0 353.500h519M0 374.500h519M0 394.500h519M0 436.500h519M0 457.500h519M0 478.500h519M0 498.500h519"/>
        <path class="major" d="M.5 0v519M104.500 0v519M207.500 0v519M311.500 0v519M415.500 0v519M0 .5h519M0 104.500h519M0 208.500h519M0 311.500h519M0 415.500h519"/>
      </pattern>
    </defs>
    <rect width="100%" height="100%" fill="url(#gridpat)"/>
    <path class="axis" d="M50.500 0v4000"/>
    <rect class="entity" x="706.500" y="279.500" width="381" height="353"/>
    <path class="cross" d="M1104 657.500h45M1156 657.500h45M1152.500 609v45M1152.500 661v45M1149.500 654.500h6v6h-6z"/>
  </svg>

  <div class="view-label"><button>[−]</button><button>[Top]</button><button>[2D Wireframe]</button></div>
  <div class="win-buttons">
    <button aria-label="Minimize"><svg width="10" height="12" viewBox="0 0 10 12"><path d="M0 8h10v3H0z" fill="#fff"/></svg></button>
    <button aria-label="Restore"><svg width="10" height="12" viewBox="0 0 10 12"><path d="M1 4.500h6v6H1zM3 2h6.500v6.500" fill="none" stroke="#fff" stroke-width="1.800"/></svg></button>
    <button aria-label="Close"><svg width="10" height="12" viewBox="0 0 10 12"><path d="M1.500 2.500l7 8M8.500 2.500l-7 8" stroke="#fff" stroke-width="2"/></svg></button>
  </div>

  <div class="viewcube">
    <svg class="ring" viewBox="0 0 120 120"><circle cx="60" cy="60" r="53" fill="none" stroke="#4a505a" stroke-width="13"/></svg>
    <button class="dir n">N</button><button class="dir w">W</button><button class="face"><span>TOP</span></button><button class="dir e">E</button><button class="dir s">S</button>
  </div>
  <button class="wcs">WCS<svg width="9" height="6" viewBox="0 0 9 6"><path d="M.5.500h8l-4 4.500z" fill="none" stroke="#777b86"/></svg></button>

  <div class="navbar">
    <svg viewBox="0 0 32 213" width="32" height="213" fill="none" stroke="#43474f" stroke-width="1.200">
      <circle cx="26" cy="5" r="3.500"/><path d="M24 3l4 4M28 3l-4 4"/>
      <circle cx="16" cy="30" r="6"/><path d="M16 19.500h10.500V30A10.500 10.500 0 1 1 16 19.500z"/><path d="M14 49h5l-2.500 2.500z" fill="#43474f"/>
      <path d="M10 83c-1-3-5-7-4.500-9s3 0 4 1.500L8 63c1-2 2.500-1 3 1l1.500 6-.5-8c1-2 2.500-1.500 3 0l.5 8 1.500-8c1.500-1 2.500 0 2.500 1.500L18.500 71l3-6c1.500-.5 2.500.5 2 2L21.500 73c2-1 4-3 5-2.500s.5 1.500-.5 2.500c-3 3-4 7-6 10z"/>
      <path d="M5 91l15 15M20 90L5 106M5 95v-4h4M16 90h4v4M5 102v4h4"/><circle cx="21" cy="104" r="5"/><path d="M24 108l4 4" stroke-width="2"/><path d="M14 121h5l-2.500 2.500z" fill="#43474f"/>
      <path d="M14 150v-14h-2l4-6 4 6h-2v14zM12 137c-8 1-8 7-1 8M21 137c7 1 7 7 0 8M7 141l4 4-4 4"/><path d="M14 158h5l-2.500 2.500z" fill="#43474f"/>
      <path d="M4 167.500h24" stroke-width="1"/><path d="M4.500 171.500h6v6h-6zM12.500 171.500h6v6h-6zM20.500 171.500h6v6h-6zM4.500 180.500h16v12h-16z"/><path d="M9 183l8 3.500-8 3.500 2-3.500z" fill="#43474f"/>
      <circle cx="26" cy="207" r="3.500"/><path d="M23 206h6M23 208h6"/>
    </svg>
  </div>

  <svg class="ucs" viewBox="0 0 80 80" width="80" height="80" role="img" aria-label="UCS icon">
    <path d="M4.500 23v48.500H54M.5 66.500h9v9h-9z" fill="none" stroke="#fff"/>
    <text x="6" y="18">Y</text><text x="60" y="70">X</text>
  </svg>

  <section class="command" aria-label="Command line">
    <div class="cmd-side">
      <svg width="17" height="6" viewBox="0 0 17 6"><path d="M0 1h17M0 5h17" stroke="#dcdcdc" stroke-width="2" stroke-dasharray="2 1"/></svg>
      <button aria-label="Close command line"><svg width="10" height="10" viewBox="0 0 8 8"><use href="#cross"/></svg></button>
      <button aria-label="Customize"><svg width="16" height="16" viewBox="0 0 16 16"><path d="M15.500 4L13 6l-2-.5L10.500 3.500 12.500 1C10 0 7.500 1.500 7.800 5L.8 13.200c-1 1.500 1 3 2.200 1.800L10 8c3 .8 6-1 5.500-4z" fill="#c3c6cc"/></svg></button>
    </div>
    <div class="cmd-main">
      <div class="log">Command: Specify the first point of the rectangle: :
Specify the opposite corner of the rectangle: :
Specify first corner point or [Chamfer/Elevation/Fillet/Thickness/Width]:
Specify other corner point or [Area/Dimensions/Rotation]:
Point or option keyword required.
Specify other corner point or [Area/Dimensions/Rotation]:</div>
      <div class="cmd-input">
        <svg width="16" height="12" viewBox="0 0 16 12"><path d="M.6.600h14.800v10.800H.6z" fill="none" stroke="#555" stroke-width="1.200"/><path d="M.5 1.500h15" stroke="#555" stroke-width="2"/><path d="M2.500 4.500l2.500 2-2.500 2M6.500 9h4" fill="none" stroke="#444"/></svg>
        <svg width="8" height="8" viewBox="0 0 8 8"><path d="M0 2h8L4 6z" fill="#444"/></svg>
        <input type="text" placeholder="Type a command" aria-label="Type a command">
        <svg width="7" height="7" viewBox="0 0 7 7"><path d="M0 5h7L3.500 1.500z" fill="#444"/></svg>
      </div>
    </div>
  </section>
</main>

<footer class="statusbar">
  <nav class="layouts" aria-label="Layouts">
    <a class="ltab current" href="#model">Model</a>
    <a class="ltab" href="#layout1">Layout1</a><span class="slash"></span>
    <a class="ltab" href="#layout2">Layout2</a><span class="slash"></span>
    <button class="add" aria-label="New layout"><svg width="12" height="12"><use href="#plus"/></svg></button><span class="slash"></span>
  </nav>
  <div class="status">
    <div class="sgroup"><button class="model">MODEL</button></div>
    <div class="sgroup"><button class="on" aria-label="Grid"><svg><use href="#s-grid"/></svg></button><button class="split" aria-label="Snap"><svg><use href="#s-snap"/></svg><svg class="tcar"><use href="#caret"/></svg></button></div>
    <div class="sgroup"><button aria-label="Ortho"><svg><use href="#s-ortho"/></svg></button><button class="split" aria-label="Polar tracking"><svg><use href="#s-polar"/></svg><svg class="tcar"><use href="#caret"/></svg></button><button class="split" aria-label="Isometric drafting"><svg><use href="#s-iso"/></svg><svg class="tcar"><use href="#caret"/></svg></button></div>
    <div class="sgroup"><button class="on" aria-label="Object snap tracking"><svg><use href="#s-track"/></svg></button><button class="on" aria-label="Object snap"><svg><use href="#s-osnap"/></svg></button><button class="only" aria-label="Object snap settings"><svg class="tcar"><use href="#caret"/></svg></button></div>
    <div class="sgroup single"><button class="on" aria-label="Dynamic UCS"><svg><use href="#s-ducs"/></svg></button></div>
    <div class="sgroup"><button class="on" aria-label="Annotation visibility"><svg><use href="#s-anno"/></svg></button><button aria-label="Auto scale"><svg><use href="#s-auto"/></svg></button><button aria-label="Annotation scale icon"><svg><use href="#needle"/></svg></button><button class="ratio">1:1<svg class="tcar"><use href="#caret"/></svg></button></div>
    <div class="sgroup"><button class="split" aria-label="Workspace"><svg><use href="#gear"/></svg><svg class="tcar"><use href="#caret"/></svg></button></div>
    <div class="sgroup single"><button aria-label="Annotation monitor"><svg><use href="#bigplus"/></svg></button></div>
    <div class="sgroup single"><button aria-label="Isolate objects"><svg><use href="#s-isolate"/></svg></button></div>
    <div class="sgroup single"><button aria-label="Graphics performance"><svg><use href="#s-perf"/></svg></button></div>
    <div class="sgroup"><button aria-label="Clean screen"><svg><use href="#s-clean"/></svg></button><button aria-label="Customization"><svg><use href="#s-menu"/></svg></button></div>
  </div>
</footer>
</body>
</html>
```
FILE: styles.css
```
* { box-sizing: border-box; }
html, body { height: 100%; }
body {
  margin: 0;
  display: flex;
  flex-direction: column;
  background: #222933;
  color: #f2f2f2;
  font: 11px/15px "Noto Sans", "Open Sans", sans-serif;
}
svg { display: block; flex: none; overflow: visible; }
button, select, input { font: inherit; color: inherit; background: none; border: 0; padding: 0; margin: 0; }
a { color: inherit; text-decoration: none; }
.sprite { position: absolute; width: 0; height: 0; }

/* Ribbon tabs */
.ribbon-tabs { display: flex; align-items: flex-end; height: 25px; padding-left: 4px; }
.rtab { height: 20px; padding: 2px 11px 2px 10px; color: #c3c6cc; white-space: nowrap; }
.rtab.active { background: #3b4453; color: #fff; padding: 2px 10px 2px 9px; }
.minimize { display: flex; align-items: center; gap: 4px; height: 18px; margin-left: 20px; }

/* Ribbon panels */
.panels { display: flex; background: #3b4453; height: 99px; padding-left: 1px; }
.panel { display: flex; flex-direction: column; flex: none; border-right: 1px solid #222933; }
.panel-body { display: flex; height: 73px; margin-top: 4px; }
.panel-title, .title-row { display: flex; align-items: center; justify-content: center; height: 22px; width: 100%; }
.panel-title { gap: 6px; }
.title-row .panel-title { flex: 1; width: auto; }
.launch { padding-right: 4px; }
.tcar { width: 8px; height: 8px; }
.big { display: flex; flex-direction: column; align-items: center; padding-top: 4px; text-align: center; line-height: 15px; white-space: nowrap; flex: none; }
.big svg { width: 32px; height: 32px; margin-bottom: 3px; }
.big .car, .small .car { width: 6px; height: 6px; margin: 0; }
.big .car { margin-top: 2px; }
.col { display: flex; flex-direction: column; flex: none; }
.small { display: flex; align-items: center; gap: 5px; height: 24px; white-space: nowrap; text-align: left; }
.small svg { width: 16px; height: 16px; }
.small .car { margin-left: 2px; }
.tools { display: flex; gap: 8px; }

.p-draw { width: 225px; }
.p-draw .big { width: 45px; }
.p-draw .big:nth-child(2) { width: 42px; }
.p-draw .big:nth-child(3) { width: 54px; }
.p-draw .big:nth-child(4) { width: 40px; }
.p-draw .col { padding-left: 5px; }
.p-modify { width: 250px; }
.p-modify .panel-body { padding-left: 7px; }
.p-modify .col { width: 72px; }
.p-modify .col:nth-child(2) { width: 69px; }
.p-modify .wide { width: 75px; }
.p-modify .col:last-child { width: 16px; }
.p-modify .wide .small { width: 61px; }
.p-modify .wide .car { margin-left: auto; }
.p-annotation { width: 189px; }
.p-annotation .big { width: 48px; }
.p-annotation .big:nth-child(2) { width: 56px; }
.p-annotation .col { padding-left: 9px; }
.p-layers { width: 273px; }
.p-layers .big { width: 63px; }
.p-layers .tools { padding-left: 3px; }
.p-block { width: 161px; }
.p-block .big { width: 42px; }
.p-block .col { padding-left: 3px; }
.p-properties { width: 265px; }
.p-properties .big { width: 64px; }
.p-groups { width: 69px; }
.p-groups .big { width: 42px; }
.p-groups .small { width: 24px; justify-content: center; }
.p-utilities { width: 97px; }
.p-utilities .big { width: 70px; }
.p-utilities .col { padding-left: 4px; }
.p-clipboard { width: 91px; }
.p-clipboard .big { width: 53px; }
.p-clipboard .col { padding-left: 4px; }
.p-view { width: 64px; border-right: 0; }
.p-view .big { width: 62px; }
.p-view .title-row { justify-content: flex-start; gap: 9px; padding-left: 4px; }
.p-view .panel-title { flex: none; gap: 7px; }
.pressed { height: 22px; margin-top: 1px; border: 1px solid #6fc1ff; background: #2f4a63; }

.combo { display: flex; align-items: center; height: 21px; flex: 1; padding: 0 2px 0 6px; background: #4d586c; border: 1px solid #2a313e; }
.combo svg { width: 16px; height: 16px; }
.combo .tcar { width: 8px; height: 8px; }
.combo select { appearance: none; flex: 1; width: 20px; height: 19px; }
.layer-combo { flex: none; width: 207px; margin: 2px 0 1px; gap: 3px; padding-left: 3px; }
.swatch { width: 16px; height: 16px; background: #fff; margin-right: 3px; }
.small-swatch { width: 14px; height: 14px; margin: 0 2px; }
.prop { display: flex; align-items: center; gap: 3px; height: 24px; width: 198px; }
.prop svg { width: 16px; height: 16px; }
.rule { width: 64px; height: 1px; background: #fff; margin-right: 1px; }

/* File tabs */
.file-tabs { display: flex; align-items: stretch; height: 27px; padding: 3px 0 0 9px; }
.slash { width: 8px; margin: 4px 0; clip-path: polygon(80% 0, 100% 0, 20% 100%, 0 100%); background: #5a6271; }
.ftab { display: flex; align-items: center; padding: 0 7px 2px 8px; }
.ftab.current { gap: 8px; padding: 0 12px 2px 17px; font-weight: 700; color: #fff; background: #3b4453; clip-path: polygon(10px 0, 100% 0, calc(100% - 9px) 100%, 0 100%); }
.add { padding: 0 10px 0 9px; }

/* Viewport */
.viewport { position: relative; flex: 1; min-height: 0; background: #212830; border-top: 4px solid #3b4453; border-bottom: 4px solid #3b4453; overflow: hidden; }
.drawing { position: absolute; inset: 0; width: 100%; height: 100%; shape-rendering: crispEdges; }
.minor { stroke: #252c38; }
.major { stroke: #2f374a; }
.axis { stroke: #177a1c; }
.entity, .cross { fill: none; stroke: #fff; }
.view-label { position: absolute; left: 3px; top: 6px; display: flex; color: #dfe1e4; font-size: 12px; }
.win-buttons { position: absolute; right: 11px; top: 9px; display: flex; gap: 10px; }
.viewcube { position: absolute; right: 15px; top: 40px; width: 136px; height: 134px; display: grid; grid-template: 20px 1fr 20px / 24px 1fr 24px; place-items: center; }
.ring { position: absolute; left: 8px; top: 7px; width: 120px; height: 120px; }
.dir { position: relative; font: bold 20px/20px "Liberation Sans", sans-serif; color: #b4b6b9; }
.n, .s { grid-column: 2; }
.w { grid-column: 1; grid-row: 2; }
.e { grid-column: 3; grid-row: 2; }
.s { grid-row: 3; }
.face { grid-column: 2; grid-row: 2; position: relative; width: 52px; height: 52px; padding: 10px; background: #b3b5b8; font: bold 12px/32px "Liberation Sans", sans-serif; color: #50555e; }
.face span { display: flex; justify-content: center; background: #a6abb2; }
.wcs { position: absolute; right: 59px; top: 194px; width: 48px; height: 18px; display: flex; align-items: center; justify-content: center; gap: 7px; border-radius: 4px; background: #9b9eaa; border: 1px solid #7f838f; color: #454953; font: 11px/16px "Liberation Sans", sans-serif; }
.navbar { position: absolute; right: 4px; top: 236px; width: 32px; height: 213px; border-radius: 4px; background: #676c74; }
.ucs { position: absolute; left: 17px; bottom: 13px; }
.ucs text { font: 300 18px Lato, sans-serif; fill: #fff; }

/* Command line */
.command { position: absolute; left: 20%; right: 20%; bottom: 1px; height: 124px; display: flex; }
.cmd-side { flex: none; width: 25px; display: flex; flex-direction: column; align-items: center; gap: 8px; padding: 4px 2px 0 0; background: #2a313e; }
.cmd-main { flex: 1; min-width: 0; display: flex; flex-direction: column; font: 14px/15px "Noto Sans Mono CJK SC", "Liberation Mono", monospace; }
.log { flex: 1; padding: 11px 2px 0; white-space: pre; background: #959799; color: #0b0d10; overflow: hidden; }
.cmd-input { display: flex; align-items: center; gap: 2px; height: 20px; margin-top: 1px; padding: 0 4px; background: #bcbdbf; color: #4c4e52; }
.cmd-input input { flex: 1; min-width: 0; padding-left: 4px; font-style: italic; outline: 0; }
.cmd-input input::placeholder { color: #5a5c60; opacity: 1; }

/* Status bar */
.statusbar { display: flex; justify-content: space-between; height: 30px; font-size: 12px; flex: none; }
.layouts { display: flex; height: 24px; padding-left: 8px; align-items: stretch; }
.ltab { display: flex; align-items: center; padding: 0 9px 0 7px; font-size: 11px; }
.ltab.current { padding: 0 17px 0 18px; font-weight: 700; color: #fff; background: #3b4453; clip-path: polygon(9px 0, 100% 0, calc(100% - 9px) 100%, 0 100%); }
.status { display: flex; gap: 3px; padding: 1px 3px 3px 0; }
.sgroup { display: flex; align-items: center; gap: 2px; background: #3b4453; }
.sgroup button { display: flex; align-items: center; justify-content: center; gap: 5px; min-width: 22px; height: 22px; }
.sgroup svg { width: 16px; height: 16px; }
.sgroup .tcar { width: 8px; height: 8px; }
.single { padding: 0 1px; }
.sgroup .split { width: 40px; gap: 8px; }
.sgroup .only { min-width: 16px; }
.sgroup .on { background: #5b8dc4; }
.sgroup .model { width: 47px; }
.sgroup .ratio { width: 31px; gap: 2px; }
```
